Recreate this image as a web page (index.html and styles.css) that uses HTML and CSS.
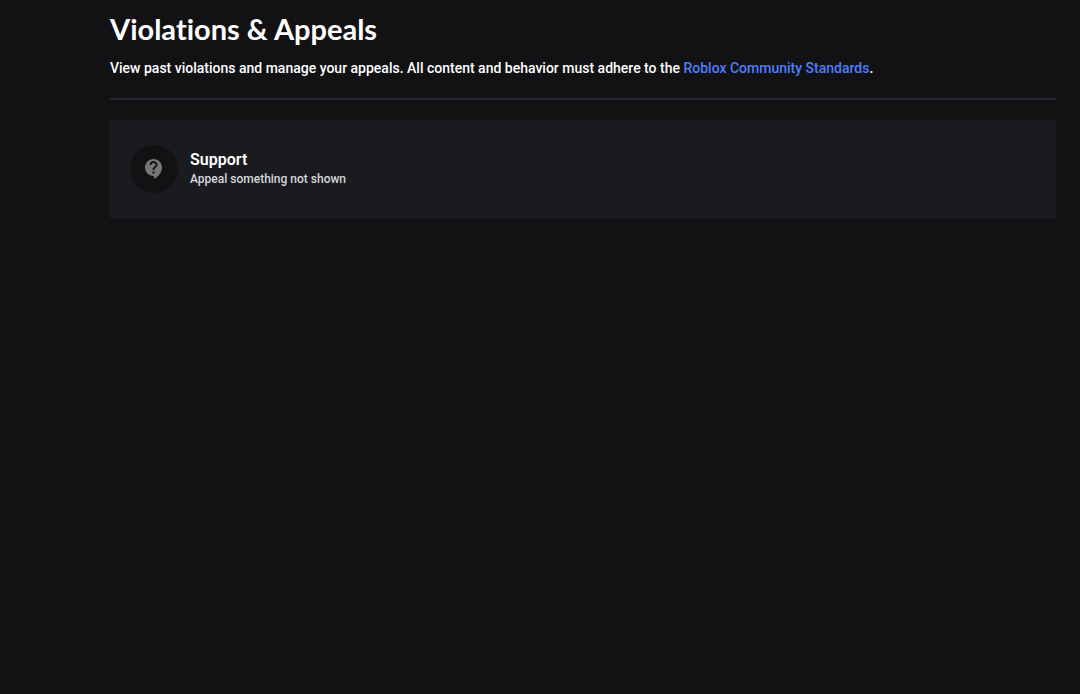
FILE: index.html
```html
<!DOCTYPE html>
<html lang="en">
<head>
    <meta charset="UTF-8">
    <meta name="viewport" content="width=device-width, initial-scale=1.0">
    <title>Violations &amp; Appeals</title>
    <link rel="stylesheet" href="styles.css">
</head>
<body>
    <main class="page">
        <header class="page-header">
            <h1>Violations &amp; Appeals</h1>
            <p>View past violations and manage your appeals. All content and behavior must adhere to the <a href="#">Roblox Community Standards</a>.</p>
        </header>

        <button type="button" class="support-card">
            <span class="support-icon">
                <svg width="24" height="24" viewBox="0 0 24 24" aria-hidden="true">
                    <path d="M11.5 2C6.81 2 3 5.81 3 10.5S6.81 19 11.5 19h.5v3c4.86-2.34 8-7 8-11.5C20 5.81 16.19 2 11.5 2zm1 14.5h-2v-2h2v2zm0-3.5h-2c0-3.25 3-3 3-5 0-1.1-.9-2-2-2s-2 .9-2 2h-2c0-2.21 1.79-4 4-4s4 1.79 4 4c0 2.5-3 2.75-3 5z"/>
                </svg>
            </span>
            <span class="support-text">
                <span class="support-title">Support</span>
                <span class="support-subtitle">Appeal something not shown</span>
            </span>
        </button>
    </main>
</body>
</html>
```
FILE: styles.css
```css
* {
    box-sizing: border-box;
}
body {
    margin: 0;
    font-family: Roboto, sans-serif;
    background-color: #121214;
    color: #fff;
}
.page {
    padding: 10px 24px 24px 110px;
}
.page-header {
    padding-bottom: 20px;
    margin-bottom: 20px;
    border-bottom: 2px solid #27272e;
}
.page-header h1 {
    margin: 0 0 10px;
    font-family: Lato, sans-serif;
    font-size: 29px;
    font-variant-ligatures: none;
    font-weight: 700;
    line-height: 38px;
}
.page-header p {
    margin: 0;
    font-size: 14px;
    font-weight: 500;
    line-height: 20px;
}
.page-header a {
    color: #4f7dff;
    text-decoration: none;
}
.support-card {
    display: flex;
    align-items: center;
    gap: 12px;
    width: 100%;
    padding: 25px 20px;
    border: none;
    background-color: #1a1b1f;
    color: #fff;
    font-family: inherit;
    text-align: left;
    cursor: pointer;
}
.support-icon {
    display: flex;
    align-items: center;
    justify-content: center;
    width: 48px;
    height: 48px;
    border-radius: 50%;
    background-color: #121214;
}
.support-icon svg {
    fill: #77777a;
}
.support-text {
    display: flex;
    flex-direction: column;
}
.support-title {
    font-size: 16px;
    font-weight: 600;
    line-height: 20px;
}
.support-subtitle {
    color: #d5d7dd;
    font-size: 12px;
    font-weight: 500;
    line-height: 18px;
}
```
